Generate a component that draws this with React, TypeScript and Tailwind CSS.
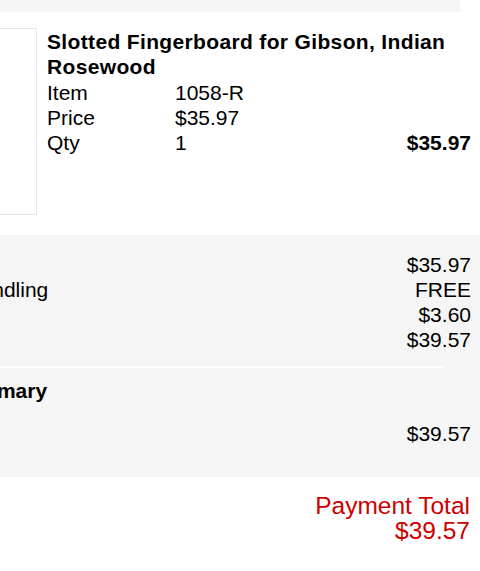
const totals = [
  { label: "Subtotal", value: "$35.97" },
  { label: "Shipping & Handling", value: "FREE" },
  { label: "Tax", value: "$3.60" },
  { label: "Total", value: "$39.57" },
];

export default function App() {
  return (
    <div className="w-[480px] h-[571px] overflow-hidden bg-white text-black font-['Liberation_Sans',Arial,sans-serif] text-[21px] leading-[25px]">
      <div className="w-[632px] -ml-[152px]">
        {/* tail of previous block */}
        <div className="h-[12px] w-[612px] bg-[#f5f5f5]" />

        {/* LINE ITEM */}
        <div className="mt-[16px] flex pl-[10px] pr-[9px]">
          <div className="w-[179px] h-[187px] shrink-0 border border-[#e6e6e6] bg-white" />
          <div className="ml-[10px] flex-1 pt-[1px]">
            <h2 className="font-bold tracking-[0.35px]">Slotted Fingerboard for Gibson, Indian Rosewood</h2>
            <div className="mt-[1px] grid grid-cols-[128px_1fr_auto]">
              <span>Item</span>
              <span>1058-R</span>
              <span />
              <span>Price</span>
              <span>$35.97</span>
              <span />
              <span>Qty</span>
              <span>1</span>
              <span className="font-bold text-right">$35.97</span>
            </div>
          </div>
        </div>

        {/* TOTALS */}
        <div className="mt-[20px] bg-[#f5f5f5] pl-[10px] pr-[9px] pt-[17px] pb-[31px]">
          {totals.map((row) => (
            <div key={row.label} className="flex justify-between">
              <span>{row.label}</span>
              <span>{row.value}</span>
            </div>
          ))}

          <div className="mt-[14px] mr-[27px] h-[2px] bg-white" />

          <h3 className="mt-[10px] font-bold">Payment Summary</h3>
          <div className="mt-[18px] flex justify-between">
            <span>Visa</span>
            <span>$39.57</span>
          </div>
        </div>

        {/* PAYMENT TOTAL */}
        <div className="pt-[16px] pr-[10px] text-right text-[24.5px] leading-[25px] text-[#cc0000]">
          <p>Payment Total</p>
          <p>$39.57</p>
        </div>
      </div>
    </div>
  );
}
